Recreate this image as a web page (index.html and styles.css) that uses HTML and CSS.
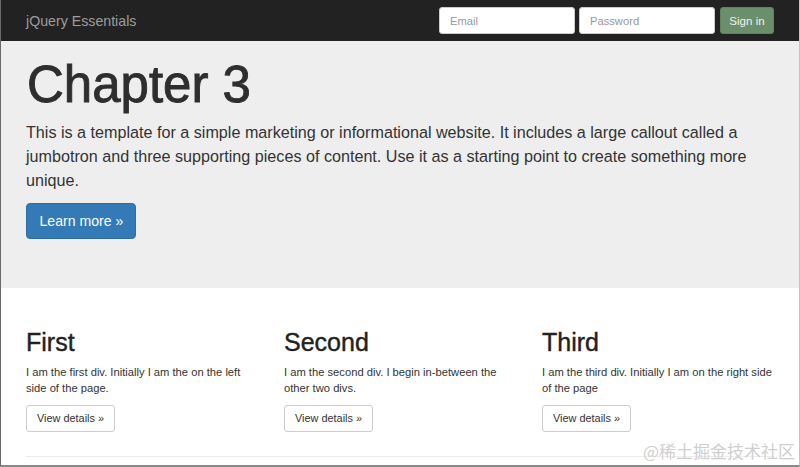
FILE: index.html
```html
<!DOCTYPE html>
<html lang="en">
<head>
<meta charset="utf-8">
<title>jQuery Essentials</title>
<link rel="stylesheet" href="styles.css">
</head>
<body>
<div class="frame">
  <nav class="navbar">
    <a class="brand" href="#">jQuery Essentials</a>
    <form class="signin">
      <input class="field" type="text" placeholder="Email">
      <input class="field" type="password" placeholder="Password">
      <button class="btn-success" type="button">Sign in</button>
    </form>
  </nav>
  <header class="jumbotron">
    <h1 class="title">Chapter 3</h1>
    <p class="lead">This is a template for a simple marketing or informational website. It includes a large callout called a jumbotron and three supporting pieces of content. Use it as a starting point to create something more unique.</p>
    <a class="btn-primary" href="#">Learn more &raquo;</a>
  </header>
  <main class="content">
    <div class="row">
      <div class="col">
        <h2 class="col-title">First</h2>
        <p class="col-text">I am the first div. Initially I am the on the left side of the page.</p>
        <a class="btn-default" href="#">View details &raquo;</a>
      </div>
      <div class="col">
        <h2 class="col-title">Second</h2>
        <p class="col-text">I am the second div. I begin in-between the other two divs.</p>
        <a class="btn-default" href="#">View details &raquo;</a>
      </div>
      <div class="col">
        <h2 class="col-title">Third</h2>
        <p class="col-text">I am the third div. Initially I am on the right side of the page</p>
        <a class="btn-default" href="#">View details &raquo;</a>
      </div>
    </div>
    <hr class="rule">
  </main>
  <div class="watermark">@稀土掘金技术社区</div>
</div>
</body>
</html>
```
FILE: styles.css
```css
* { box-sizing: border-box; }
html, body { margin: 0; padding: 0; }
body {
  font-family: "Liberation Sans", Arial, Helvetica, sans-serif;
  color: #333;
  background: #fff;
}
.frame {
  position: relative;
  width: 800px;
  height: 467px;
  overflow: hidden;
  border-left: 1px solid #6a6a6a;
  border-right: 1px solid #c4c4c4;
  border-bottom: 2px solid #8a8a8a;
  background: #fff;
}
.navbar {
  height: 41px;
  background: #222;
  display: flex;
  align-items: center;
  padding: 0 25px 0 25px;
}
.brand {
  font-size: 14.2px;
  color: #9d9d9d;
  text-decoration: none;
  flex: 1;
  padding-top: 1px;
}
.signin {
  display: flex;
  align-items: center;
  gap: 4px;
  margin: 0;
}
.field {
  width: 136px;
  height: 27px;
  border: 1px solid #ccc;
  border-radius: 3px;
  background: #fff;
  padding: 0 10px;
  font-family: "Liberation Sans", Arial, sans-serif;
  font-size: 11.2px;
  color: #555;
  margin: 0;
}
.field::placeholder { color: #999; }
.btn-success {
  margin-left: 1px;
  height: 27px;
  width: 54px;
  padding: 0;
  border: 1px solid #5f835f;
  border-radius: 3px;
  background: #6b8f6c;
  color: #eef3ee;
  font-family: "Liberation Sans", Arial, sans-serif;
  font-size: 11.6px;
}
.jumbotron {
  background: #eee;
  padding: 16px 25px 49px;
  height: 247px;
}
.title {
  margin: 0;
  font-size: 51px;
  line-height: 55px;
  font-weight: 400;
  -webkit-text-stroke: 0.9px #2e2e2e;
  color: #2e2e2e;
  padding-left: 1px;
}
.lead {
  margin: 8px 0 0;
  font-size: 16.15px;
  line-height: 24px;
  font-weight: 300;
  width: 750px;
}
.btn-primary {
  display: inline-block;
  margin-top: 11px;
  height: 36px;
  line-height: 34px;
  padding: 0 12px 0 12.5px;
  border: 1px solid #2e6da4;
  border-radius: 4px;
  background: #337ab7;
  color: #fff;
  font-size: 14.1px;
  text-decoration: none;
}
.content {
  padding: 41px 25px 0;
}
.row {
  display: grid;
  grid-template-columns: repeat(3, 234px);
  column-gap: 24px;
}
.col-title {
  margin: 0;
  font-size: 25px;
  line-height: 27.5px;
  font-weight: 400;
  -webkit-text-stroke: 0.4px #222;
  color: #222;
}
.col-text {
  margin: 7px 0 0;
  font-size: 11.2px;
  line-height: 16px;
}
.btn-default {
  display: inline-block;
  margin-top: 9px;
  height: 27px;
  line-height: 25px;
  padding: 0 10px;
  border: 1px solid #ccc;
  border-radius: 3px;
  background: #fff;
  color: #333;
  font-size: 10.9px;
  text-decoration: none;
}
.rule {
  margin: 24px 0 0;
  border: 0;
  border-top: 1px solid #eee;
}
.watermark {
  position: absolute;
  right: 4px;
  bottom: 2px;
  font-family: "Noto Sans CJK SC", sans-serif;
  font-size: 17px;
  color: #cfcfcf;
  letter-spacing: 0px;
}
```
